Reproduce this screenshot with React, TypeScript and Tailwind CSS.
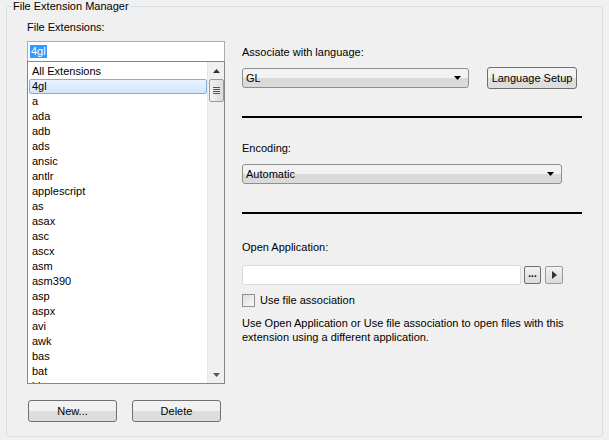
import React from "react";

const extensions = [
  "All Extensions", "4gl", "a", "ada", "adb", "ads", "ansic", "antlr", "applescript",
  "as", "asax", "asc", "ascx", "asm", "asm390", "asp", "aspx", "avi", "awk", "bas", "bat", "bb",
];

function Arrow({ dir }: { dir: "up" | "down" | "right" }) {
  if (dir === "right")
    return (
      <svg width="5" height="8" viewBox="0 0 5 8">
        <path d="M0 0 L5 4 L0 8 Z" fill="#333" />
      </svg>
    );
  return (
    <svg width="7" height="4" viewBox="0 0 7 4">
      <path d={dir === "up" ? "M0 4 L3.5 0 L7 4 Z" : "M0 0 L7 0 L3.5 4 Z"} fill={dir === "up" ? "#333" : "#555"} />
    </svg>
  );
}

function Combo({ value, width }: { value: string; width: string }) {
  return (
    <div
      className={`${width} h-[20px] flex items-center justify-between pl-[3px] pr-[7px] border border-[#8e8f8f] rounded-[3px] bg-linear-to-b from-[#f2f2f2] from-50% to-[#dadada] to-50%`}
    >
      <span>{value}</span>
      <svg width="7" height="4" viewBox="0 0 7 4">
        <path d="M0 0 L7 0 L3.5 4 Z" fill="#000" />
      </svg>
    </div>
  );
}

function Button({ label, className }: { label: string; className: string }) {
  return (
    <button
      className={`${className} flex items-center justify-center border border-[#707070] rounded-[3px] bg-linear-to-b from-[#f2f2f2] from-50% to-[#dddddd] to-50% text-[#000]`}
    >
      {label}
    </button>
  );
}

export default function App() {
  return (
    <div
      className="w-[609px] h-[440px] bg-[#f0f0f0] text-[11px] text-black overflow-hidden"
      style={{ fontFamily: '"Liberation Sans", Arial, sans-serif' }}
    >
      <fieldset className="mx-[6px] h-[437px] border border-[#d5dfe5] rounded-[3px]">
        <legend className="ml-[4px] px-[2px] leading-[13px]">File Extension Manager</legend>
        <div className="flex pl-[20px]">
          {/* left column */}
          <div className="w-[198px] flex flex-col">
            <div className="mt-[8px] leading-[13px]">File Extensions:</div>
            <div className="mt-[7px] h-[21px] border border-[#abadb3] bg-white flex items-center pl-[2px]">
              <span className="bg-[#3399ff] text-white leading-[13px] px-[1px]">4gl</span>
            </div>
            <div className="h-[323px] -mt-px border border-[#828790] bg-white flex overflow-hidden">
              <div className="flex-1 pt-[2px] pl-px">
                {extensions.map((e) =>
                  e === "4gl" ? (
                    <div
                      key={e}
                      className="h-[15px] leading-[13px] pl-[2px] border border-[#84acdd] rounded-[2px] bg-linear-to-b from-[#eaf3fd] to-[#d2e5fb]"
                    >
                      {e}
                    </div>
                  ) : (
                    <div key={e} className="h-[15px] leading-[15px] pl-[3px]">
                      {e}
                    </div>
                  )
                )}
              </div>
              <div className="w-[17px] bg-[#f0f0f0] flex flex-col items-center border-l border-[#e6e6e6]">
                <div className="h-[17px] flex items-center justify-center">
                  <Arrow dir="up" />
                </div>
                <div className="w-[15px] h-[23px] border border-[#9a9a9a] rounded-[2px] bg-linear-to-r from-[#f2f2f2] to-[#dcdcdc] flex flex-col items-center justify-center gap-[1px]">
                  <div className="w-[7px] h-px bg-[#555]" />
                  <div className="w-[7px] h-px bg-[#555]" />
                  <div className="w-[7px] h-px bg-[#555]" />
                  <div className="w-[7px] h-px bg-[#555]" />
                </div>
                <div className="flex-1" />
                <div className="h-[17px] flex items-center justify-center">
                  <Arrow dir="down" />
                </div>
              </div>
            </div>
            <div className="mt-[16px] flex gap-[15px] pl-px">
              <Button label="New..." className="w-[89px] h-[22px]" />
              <Button label="Delete" className="w-[89px] h-[22px]" />
            </div>
          </div>

          {/* right column */}
          <div className="ml-[17px] w-[340px] flex flex-col">
            <div className="mt-[33px] leading-[13px]">Associate with language:</div>
            <div className="mt-[8px] flex items-center">
              <Combo value="GL" width="w-[227px]" />
              <Button label="Language Setup" className="ml-[18px] w-[90px] h-[22px]" />
            </div>
            <div className="mt-[27px] h-[2px] bg-black" />
            <div className="mt-[24px] leading-[13px]">Encoding:</div>
            <div className="mt-[9px]">
              <Combo value="Automatic" width="w-[320px]" />
            </div>
            <div className="mt-[28px] h-[2px] bg-black" />
            <div className="mt-[27px] leading-[13px]">Open Application:</div>
            <div className="mt-[11px] flex items-center">
              <div className="w-[279px] h-[20px] border border-[#dcdcdc] rounded-[2px] bg-white" />
              <div className="ml-[3px] w-[17px] h-[18px] border border-[#707070] rounded-[2px] bg-linear-to-b from-[#f2f2f2] to-[#dadada] flex items-center justify-center text-[10px] font-bold leading-[8px] pb-[2px]">
                ...
              </div>
              <div className="ml-[4px] w-[18px] h-[18px] border border-[#9a9a9a] rounded-[2px] bg-linear-to-b from-[#f2f2f2] to-[#dadada] flex items-center justify-center">
                <Arrow dir="right" />
              </div>
            </div>
            <div className="mt-[7px] flex items-center">
              <div className="w-[13px] h-[13px] border border-[#8e8f8f] bg-linear-to-br from-[#dcdcdc] to-[#fbfbfb]" />
              <span className="ml-[5px]">Use file association</span>
            </div>
            <div className="mt-[7px] leading-[14px]">
              Use Open Application or Use file association to open files with this
              <br />
              extension using a different application.
            </div>
          </div>
        </div>
      </fieldset>
    </div>
  );
}
